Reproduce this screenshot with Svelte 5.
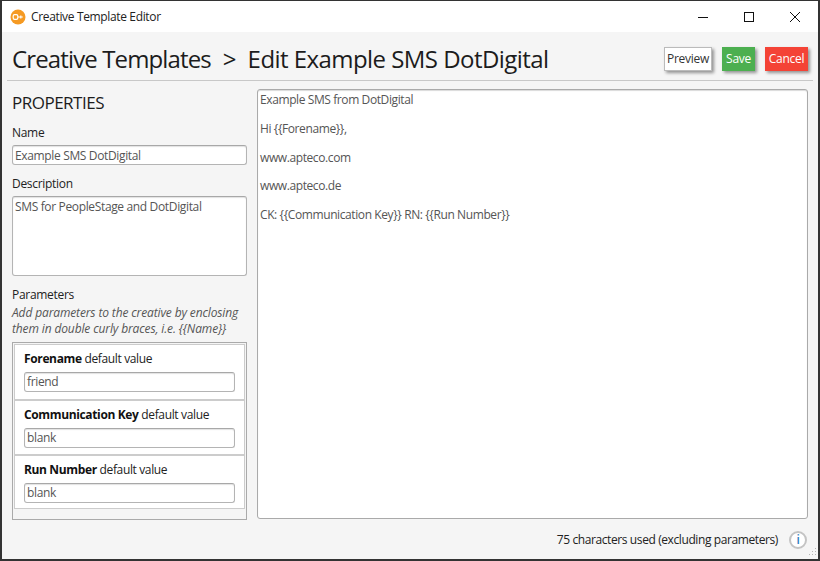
<script>
  const params = [
    { name: 'Forename', value: 'friend' },
    { name: 'Communication Key', value: 'blank' },
    { name: 'Run Number', value: 'blank' }
  ];
  const lines = [
    'Example SMS from DotDigital',
    'Hi {{Forename}},',
    'www.apteco.com',
    'www.apteco.de',
    'CK: {{Communication Key}} RN: {{Run Number}}'
  ];
</script>

<div class="window">
  <div class="titlebar">
    <svg class="logo" width="16" height="16" viewBox="0 0 16 16">
      <circle cx="8" cy="8" r="7.5" fill="#f59a23" />
      <rect x="3.2" y="5.6" width="4.6" height="4.8" rx="1.4" fill="none" stroke="#fff" stroke-width="1.2" />
      <path d="M8 8h4.8M10.8 6.6v2.8" stroke="#fff" stroke-width="1.2" fill="none" />
    </svg>
    <span class="apptitle">Creative Template Editor</span>
    <div class="winctl">
      <svg width="46" height="32" viewBox="0 0 46 32"><path d="M18 16.5h10" stroke="#111" stroke-width="1" /></svg>
      <svg width="46" height="32" viewBox="0 0 46 32"><rect x="18.5" y="11.5" width="9" height="9" fill="none" stroke="#111" /></svg>
      <svg width="46" height="32" viewBox="0 0 46 32"><path d="M18 11l10 10M28 11l-10 10" stroke="#111" stroke-width="1" /></svg>
    </div>
  </div>

  <div class="body">
    <header class="head">
      <h1><span class="crumb">Creative Templates</span><span class="sep">&gt;</span><span class="page">Edit Example SMS DotDigital</span></h1>
      <div class="actions">
        <button class="btn preview">Preview</button>
        <button class="btn save">Save</button>
        <button class="btn cancel">Cancel</button>
      </div>
    </header>

    <div class="main">
      <aside class="side">
        <h2>PROPERTIES</h2>
        <div class="label name-label">Name</div>
        <div class="field">Example SMS DotDigital</div>
        <div class="label desc-label">Description</div>
        <div class="field area">SMS for PeopleStage and DotDigital</div>
        <div class="label param-label">Parameters</div>
        <div class="hint">Add parameters to the creative by enclosing them in double curly braces, i.e. {'{{'}Name{'}}'}</div>
        <div class="panel">
          <div class="inner">
            {#each params as p}
              <div class="row">
                <div class="rowlabel"><b>{p.name}</b> default value</div>
                <div class="field small">{p.value}</div>
              </div>
            {/each}
          </div>
        </div>
      </aside>

      <section class="editor">
        {#each lines as l}
          <p>{l}</p>
        {/each}
      </section>
    </div>

    <footer class="foot">
      <span>75 characters used (excluding parameters)</span>
      <span class="info">i</span>
    </footer>
    <svg class="grip" width="12" height="12" viewBox="0 0 12 12">
      <g fill="#b5b5b5">
        <rect x="9" y="1" width="1" height="1" />
        <rect x="6" y="4" width="1" height="1" /><rect x="9" y="4" width="1" height="1" />
        <rect x="3" y="7" width="1" height="1" /><rect x="6" y="7" width="1" height="1" /><rect x="9" y="7" width="1" height="1" />
      </g>
    </svg>
  </div>
</div>

<style>
  :global(body) {
    margin: 0;
    background: #f5f5f5;
  }
  .window {
    position: relative;
    width: 820px;
    height: 561px;
    box-sizing: border-box;
    border: 1px solid #333;
    border-left-width: 2px;
    border-right-width: 2px;
    border-bottom-width: 2px;
    background: #f5f5f5;
    font-family: "Open Sans", "Noto Sans", sans-serif;
    font-size: 12px;
    color: #444;
    overflow: hidden;
    display: flex;
    flex-direction: column;
  }
  .titlebar {
    height: 31px;
    flex: none;
    background: #fff;
    display: flex;
    align-items: center;
    padding-left: 8px;
    color: #222;
  }
  .logo { margin-right: 5px; }
  .apptitle { font-size: 12px; letter-spacing: -0.35px; }
  .winctl {
    margin-left: auto;
    display: flex;
    margin-right: 0;
  }
  .body {
    flex: 1;
    position: relative;
    display: flex;
    flex-direction: column;
    min-height: 0;
  }
  .head {
    height: 49px;
    flex: none;
    box-sizing: border-box;
    margin: 0 5px;
    padding: 5px 5px 0;
    border-bottom: 1px solid #c8c8c8;
    display: flex;
    align-items: center;
    justify-content: space-between;
  }
  h1 {
    margin: 0;
    font-size: 24px;
    font-weight: 400;
    color: #1c1c1c;
    white-space: nowrap;
  }
  .crumb { letter-spacing: -0.87px; }
  .sep { margin: 0 11px 0 12px; letter-spacing: 0; }
  .page { letter-spacing: -0.55px; }
  .actions {
    display: flex;
    gap: 10px;
    margin-top: 0;
  }
  .btn {
    height: 24px;
    border: 0;
    padding: 0;
    font: inherit;
    letter-spacing: -0.3px;
    box-shadow: 2px 2px 3px rgba(0, 0, 0, 0.4);
  }
  .preview { width: 48px; background: #fff; color: #333; outline: 1px solid #bbb; outline-offset: -1px; }
  .save { width: 33px; background: #4caf50; color: #fff; }
  .cancel { width: 43px; background: #f44336; color: #fff; }
  .main {
    flex: 1;
    min-height: 0;
    display: flex;
    gap: 10px;
    padding: 8px 10px 0;
  }
  .side {
    width: 235px;
    flex: none;
    display: flex;
    flex-direction: column;
  }
  h2 {
    margin: 0;
    font-size: 17px;
    font-weight: 400;
    color: #1c1c1c;
    line-height: 24px;
    letter-spacing: -0.5px;
    height: 24px;
    margin-top: 2px;
  }
  .label {
    color: #222;
    line-height: 16px;
    letter-spacing: -0.3px;
  }
  .name-label { margin-top: 10px; margin-bottom: 4px; }
  .desc-label { margin-top: 11px; margin-bottom: 4px; }
  .param-label { margin-top: 11px; }
  .field {
    box-sizing: border-box;
    height: 20px;
    border: 1px solid #b4b4b4;
    border-top-color: #a8a8a8;
    border-radius: 3px;
    background: #fff;
    padding: 0 2px;
    line-height: 19px;
    color: #555;
    letter-spacing: -0.35px;
    box-shadow: inset 0 1px 1px rgba(0, 0, 0, 0.12);
  }
  .field.small { line-height: 18px; }
  .field.area { height: 80px; }
  .hint {
    font-style: italic;
    color: #555;
    line-height: 16px;
    letter-spacing: -0.13px;
    margin-top: 2px;
    margin-bottom: 5px;
  }
  .panel {
    box-sizing: border-box;
    height: 178px;
    border: 1px solid #aaa;
    padding: 1px;
    background: #f5f5f5;
  }
  .inner {
    border: 1px solid #ccc;
    background: #fff;
  }
  .row {
    box-sizing: border-box;
    height: 55.5px;
    border-bottom: 2px solid #ccc;
    padding: 6px 9px 0;
  }
  .row:last-child { border-bottom: 0; height: 52px; }
  .rowlabel {
    color: #222;
    line-height: 16px;
    letter-spacing: -0.36px;
    margin-bottom: 5px;
  }
  .rowlabel b { font-weight: 700; color: #111; }
  .editor {
    flex: 1;
    height: 430px;
    box-sizing: border-box;
    border: 1px solid #aaa;
    border-radius: 3px;
    background: #fff;
    padding: 2px;
    box-shadow: inset 0 1px 1px rgba(0, 0, 0, 0.15);
    color: #555;
    letter-spacing: -0.4px;
    line-height: 16px;
  }
  .editor p { margin: 0 0 12.75px; }
  .foot {
    height: 39px;
    flex: none;
    display: flex;
    align-items: center;
    justify-content: flex-end;
    gap: 11px;
    padding-right: 11px;
    color: #222;
    letter-spacing: -0.4px;
  }
  .info {
    width: 18px;
    height: 18px;
    box-sizing: border-box;
    border: 2px solid #c4c4c4;
    border-radius: 50%;
    display: flex;
    align-items: center;
    justify-content: center;
    color: #2f7fc1;
    font-size: 12px;
    font-weight: 600;
    background: #fff;
  }
  .grip { position: absolute; right: 0; bottom: 0; }
</style>
